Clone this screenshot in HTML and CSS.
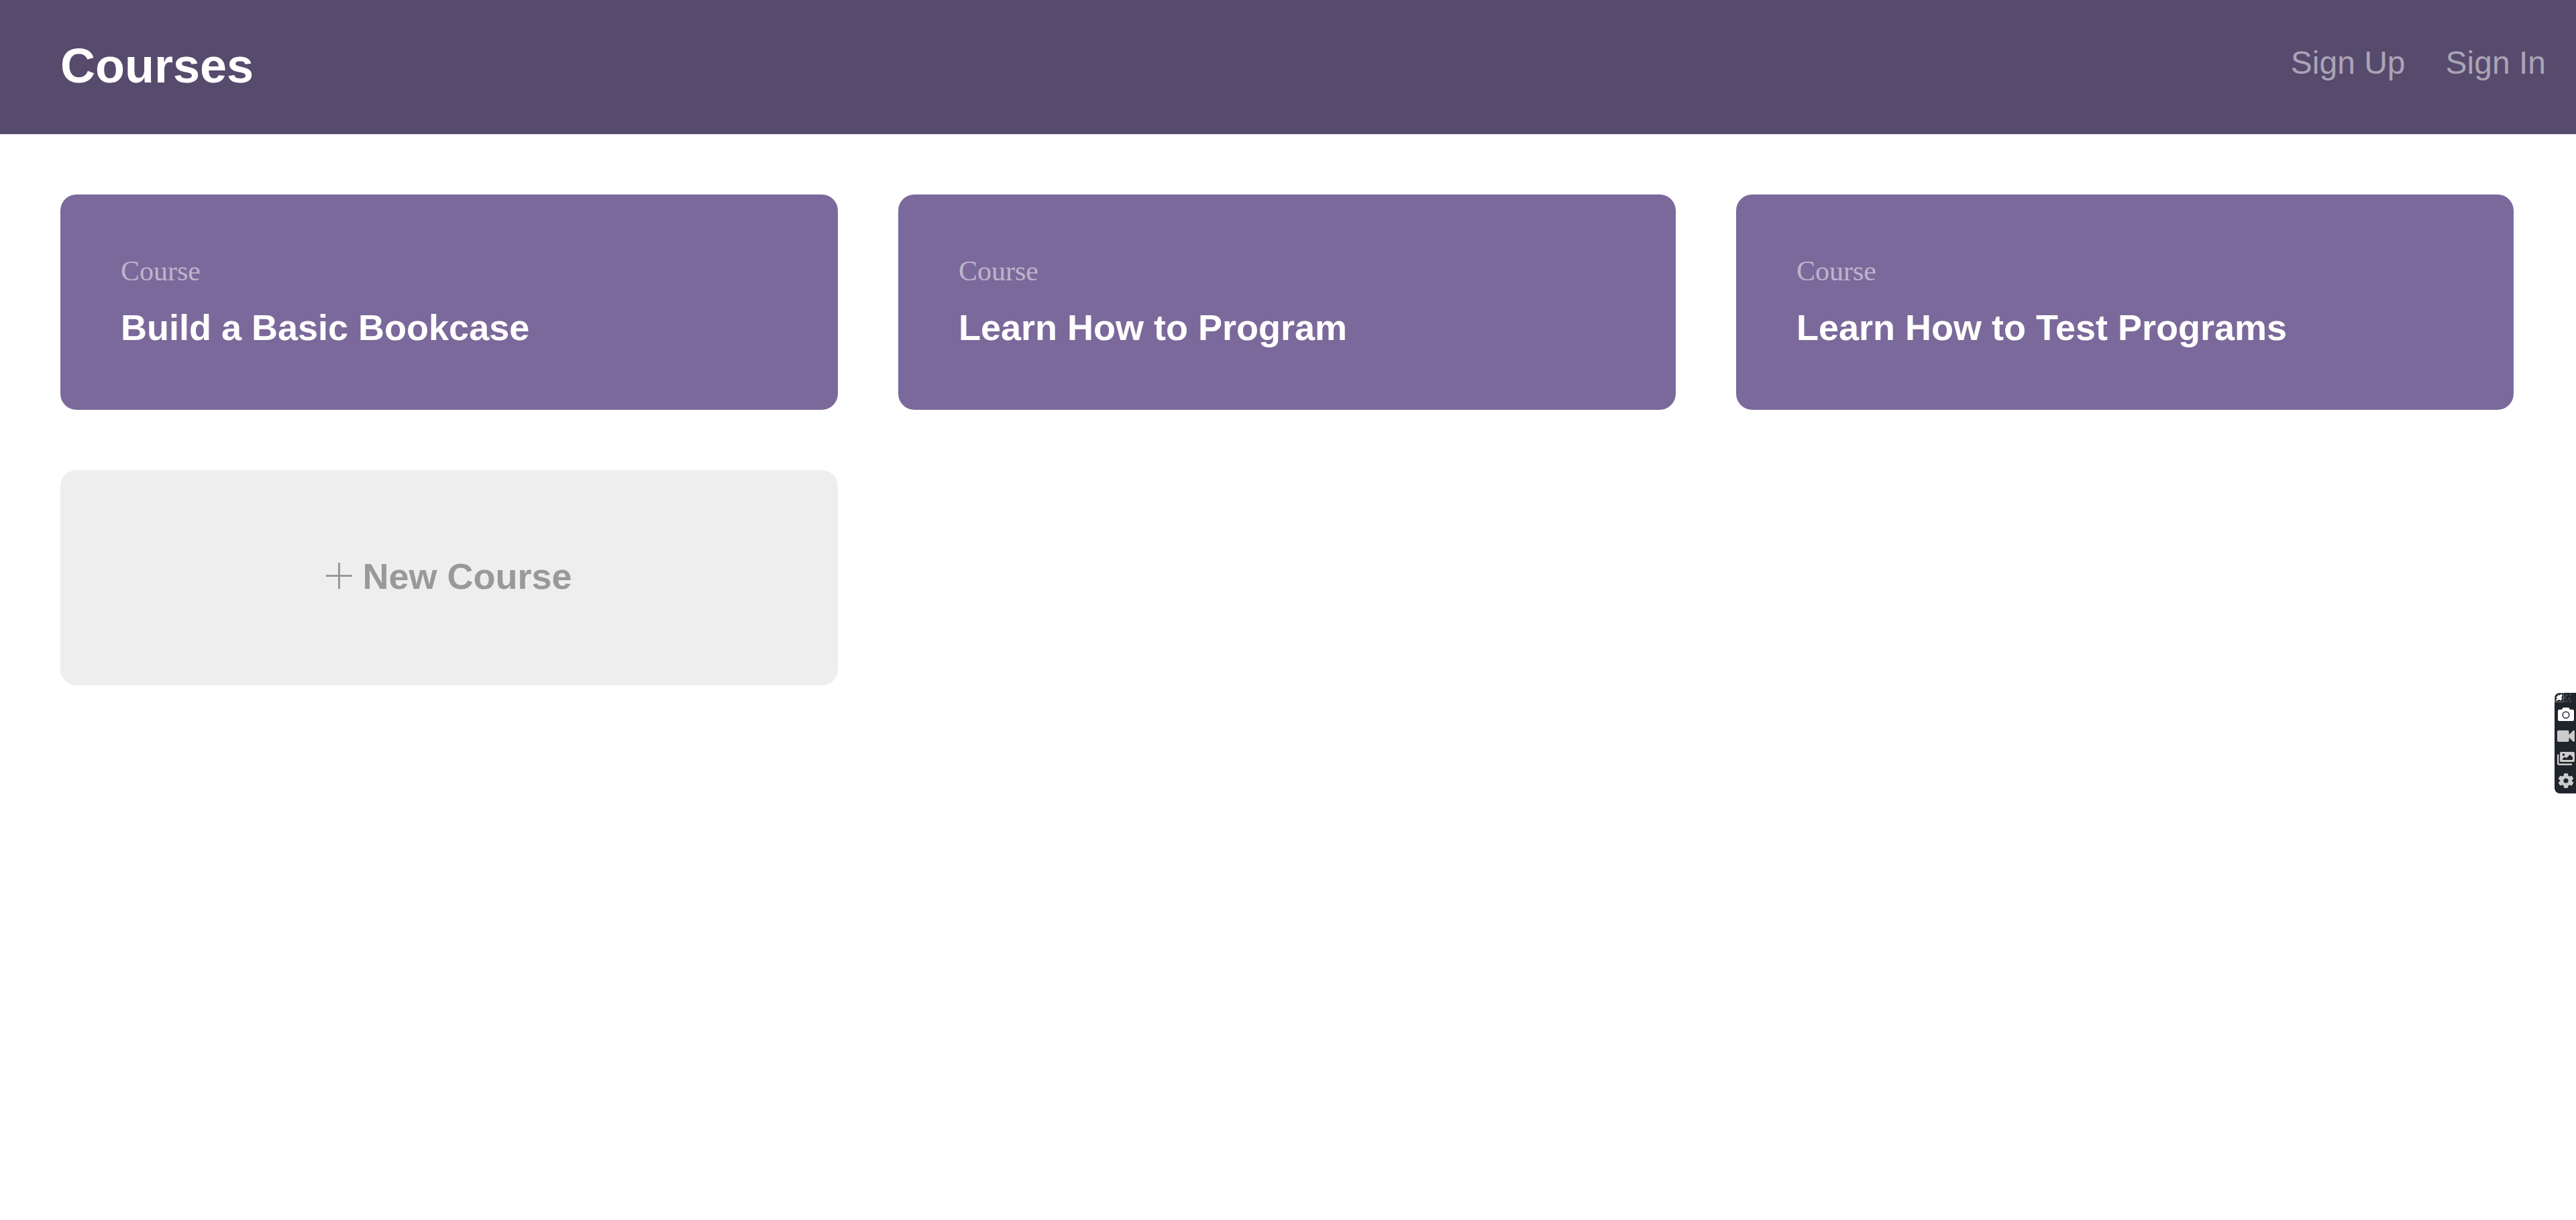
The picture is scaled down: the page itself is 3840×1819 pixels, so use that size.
FILE: index.html
```html
<!DOCTYPE html>
<html lang="en">
<head>
<meta charset="utf-8">
<title>Courses</title>
<link rel="stylesheet" href="styles.css">
</head>
<body>
<header class="header">
  <h1 class="header-title">Courses</h1>
  <nav class="header-nav">
    <a href="#">Sign Up</a>
    <a href="#">Sign In</a>
  </nav>
</header>
<main class="courses">
  <a class="course" href="#">
    <span class="course-label">Course</span>
    <h2 class="course-title">Build a Basic Bookcase</h2>
  </a>
  <a class="course" href="#">
    <span class="course-label">Course</span>
    <h2 class="course-title">Learn How to Program</h2>
  </a>
  <a class="course" href="#">
    <span class="course-label">Course</span>
    <h2 class="course-title">Learn How to Test Programs</h2>
  </a>
  <a class="course course-new" href="#">
    <svg class="plus" viewBox="0 0 13 13" aria-hidden="true"><path d="M7 6V0H6v6H0v1h6v6h1V7h6V6z"/></svg>
    <span class="course-title">New Course</span>
  </a>
</main>
<aside class="capture" aria-label="Capture tools">
  <div class="capture-top">
    <button class="pin" aria-label="Pin">
      <svg viewBox="0 0 12 12"><path d="M4 1 6 3 9 1 11 3 9 6 11 8 9 9 8 11 6 9 2 11 1 10 3 7 1 5 4 4z"/></svg>
    </button>
    <svg class="grip" viewBox="0 0 18 14" aria-hidden="true"><path d="M2 2h3v3H2zM8 1h3v3H8zM0 6h3v3H0zM6 7h3v3H6zM2 11h3v3H2zM8 11h3v3H8z"/></svg>
  </div>
  <button class="tool tool-active" aria-label="Screenshot">
    <svg viewBox="0 0 28 24"><path fill-rule="evenodd" d="M4 5h4l1-2q.5-1 1.500-1h7q1 0 1.500 1l1 2h4q2 0 2 2v13q0 2-2 2H4q-2 0-2-2V7q0-2 2-2zM14 7.500a5.500 5.500 0 1 0 0 11a5.500 5.500 0 0 0 0-11z"/><circle cx="14" cy="13" r="4"/></svg>
  </button>
  <button class="tool" aria-label="Record video">
    <svg viewBox="0 0 28 24"><path d="M3 3h13.500q2 0 2 2v4.500L24 4q1-1 2-1 1 0 1 1v15q0 1-1 1t-2-1l-5.500-5.500V18q0 2-2 2H3q-2 0-2-2V5q0-2 2-2z"/></svg>
  </button>
  <button class="tool" aria-label="Gallery">
    <svg viewBox="0 0 28 24"><path fill-rule="evenodd" d="M7 2h18q2 0 2 2v11q0 2-2 2H7q-2 0-2-2V4q0-2 2-2zM9 14h15v-4l-4-4-5.500 5.500-2-2L9 12zM10.500 4.500a1.800 1.800 0 1 0 0 3.600a1.800 1.800 0 0 0 0-3.600z"/><path d="M2.200 6v13q0 1.800 1.800 1.800h19" fill="none" stroke="currentColor" stroke-width="2.400"/></svg>
  </button>
  <button class="tool" aria-label="Settings">
    <svg viewBox="0 0 28 24"><path fill-rule="evenodd" stroke="currentColor" stroke-width="1.200" stroke-linejoin="round" d="M11.800 1.600h4.400l.8 3.300 2.200 1.300 3.200-1 2.200 3.800-2.500 2.200v1.600l2.500 2.200-2.200 3.800-3.200-1-2.200 1.300-.8 3.300h-4.400l-.8-3.300-2.200-1.300-3.200 1-2.200-3.800 2.500-2.200v-1.600L3.400 9l2.200-3.800 3.200 1L11 4.900zM14 7.800a4.200 4.200 0 1 0 0 8.400a4.200 4.200 0 0 0 0-8.400z"/></svg>
  </button>
</aside>
</body>
</html>
```
FILE: styles.css
```css
* {
  box-sizing: border-box;
}

body {
  margin: 0;
  background: #fff;
  font-family: "Liberation Sans", Arial, sans-serif;
}

a {
  color: inherit;
  text-decoration: none;
}

.header {
  display: flex;
  justify-content: space-between;
  align-items: flex-start;
  padding: 58px 45px 62px 90px;
  background: #564a6d;
  color: #fff;
}

.header-title {
  margin: 0;
  font-size: 72px;
  line-height: 80px;
}

.header-nav {
  display: flex;
  gap: 60px;
  color: rgba(255, 255, 255, 0.5);
  font-size: 48px;
  line-height: 72px;
}

.courses {
  display: grid;
  grid-template-columns: repeat(3, 1fr);
  gap: 90px;
  padding: 90px 93px 90px 90px;
}

.course {
  display: flex;
  flex-direction: column;
  gap: 30px;
  padding: 90px 90px 93px;
  border-radius: 24px;
  background: #7b699b;
  color: #fff;
}

.course-label {
  color: rgba(255, 255, 255, 0.5);
  font-family: "Liberation Serif", "Times New Roman", serif;
  font-size: 42px;
  line-height: 48px;
}

.course-title {
  margin: 0;
  font-size: 54px;
  font-weight: bold;
  line-height: 60px;
}

.course-new {
  flex-direction: row;
  justify-content: center;
  align-items: baseline;
  gap: 15px;
  padding: 128px 90px 133px;
  background: #eee;
  color: #999;
}

.plus {
  width: 39px;
  height: 39px;
  fill: currentColor;
}

.capture {
  position: fixed;
  top: 1033px;
  right: 0;
  width: 32px;
  padding-bottom: 3px;
  overflow: hidden;
  border-radius: 8px 0 0 8px;
  background: #20242b;
}

.capture button {
  display: block;
  border: 0;
  padding: 0;
  background: none;
  color: #ccc;
}

.capture svg {
  display: block;
  fill: currentColor;
}

.capture-top {
  display: flex;
  height: 15px;
}

.capture .pin {
  width: 14px;
  height: 14px;
  border: 1px solid #777;
  color: #fff;
}

.grip {
  width: 18px;
  height: 14px;
  color: #41454b;
}

.capture .tool {
  width: 32px;
  height: 33px;
  padding: 5px 1px 4px 3px;
}

.capture .tool-active {
  color: #fff;
}

.tool svg {
  width: 28px;
  height: 24px;
}
```
